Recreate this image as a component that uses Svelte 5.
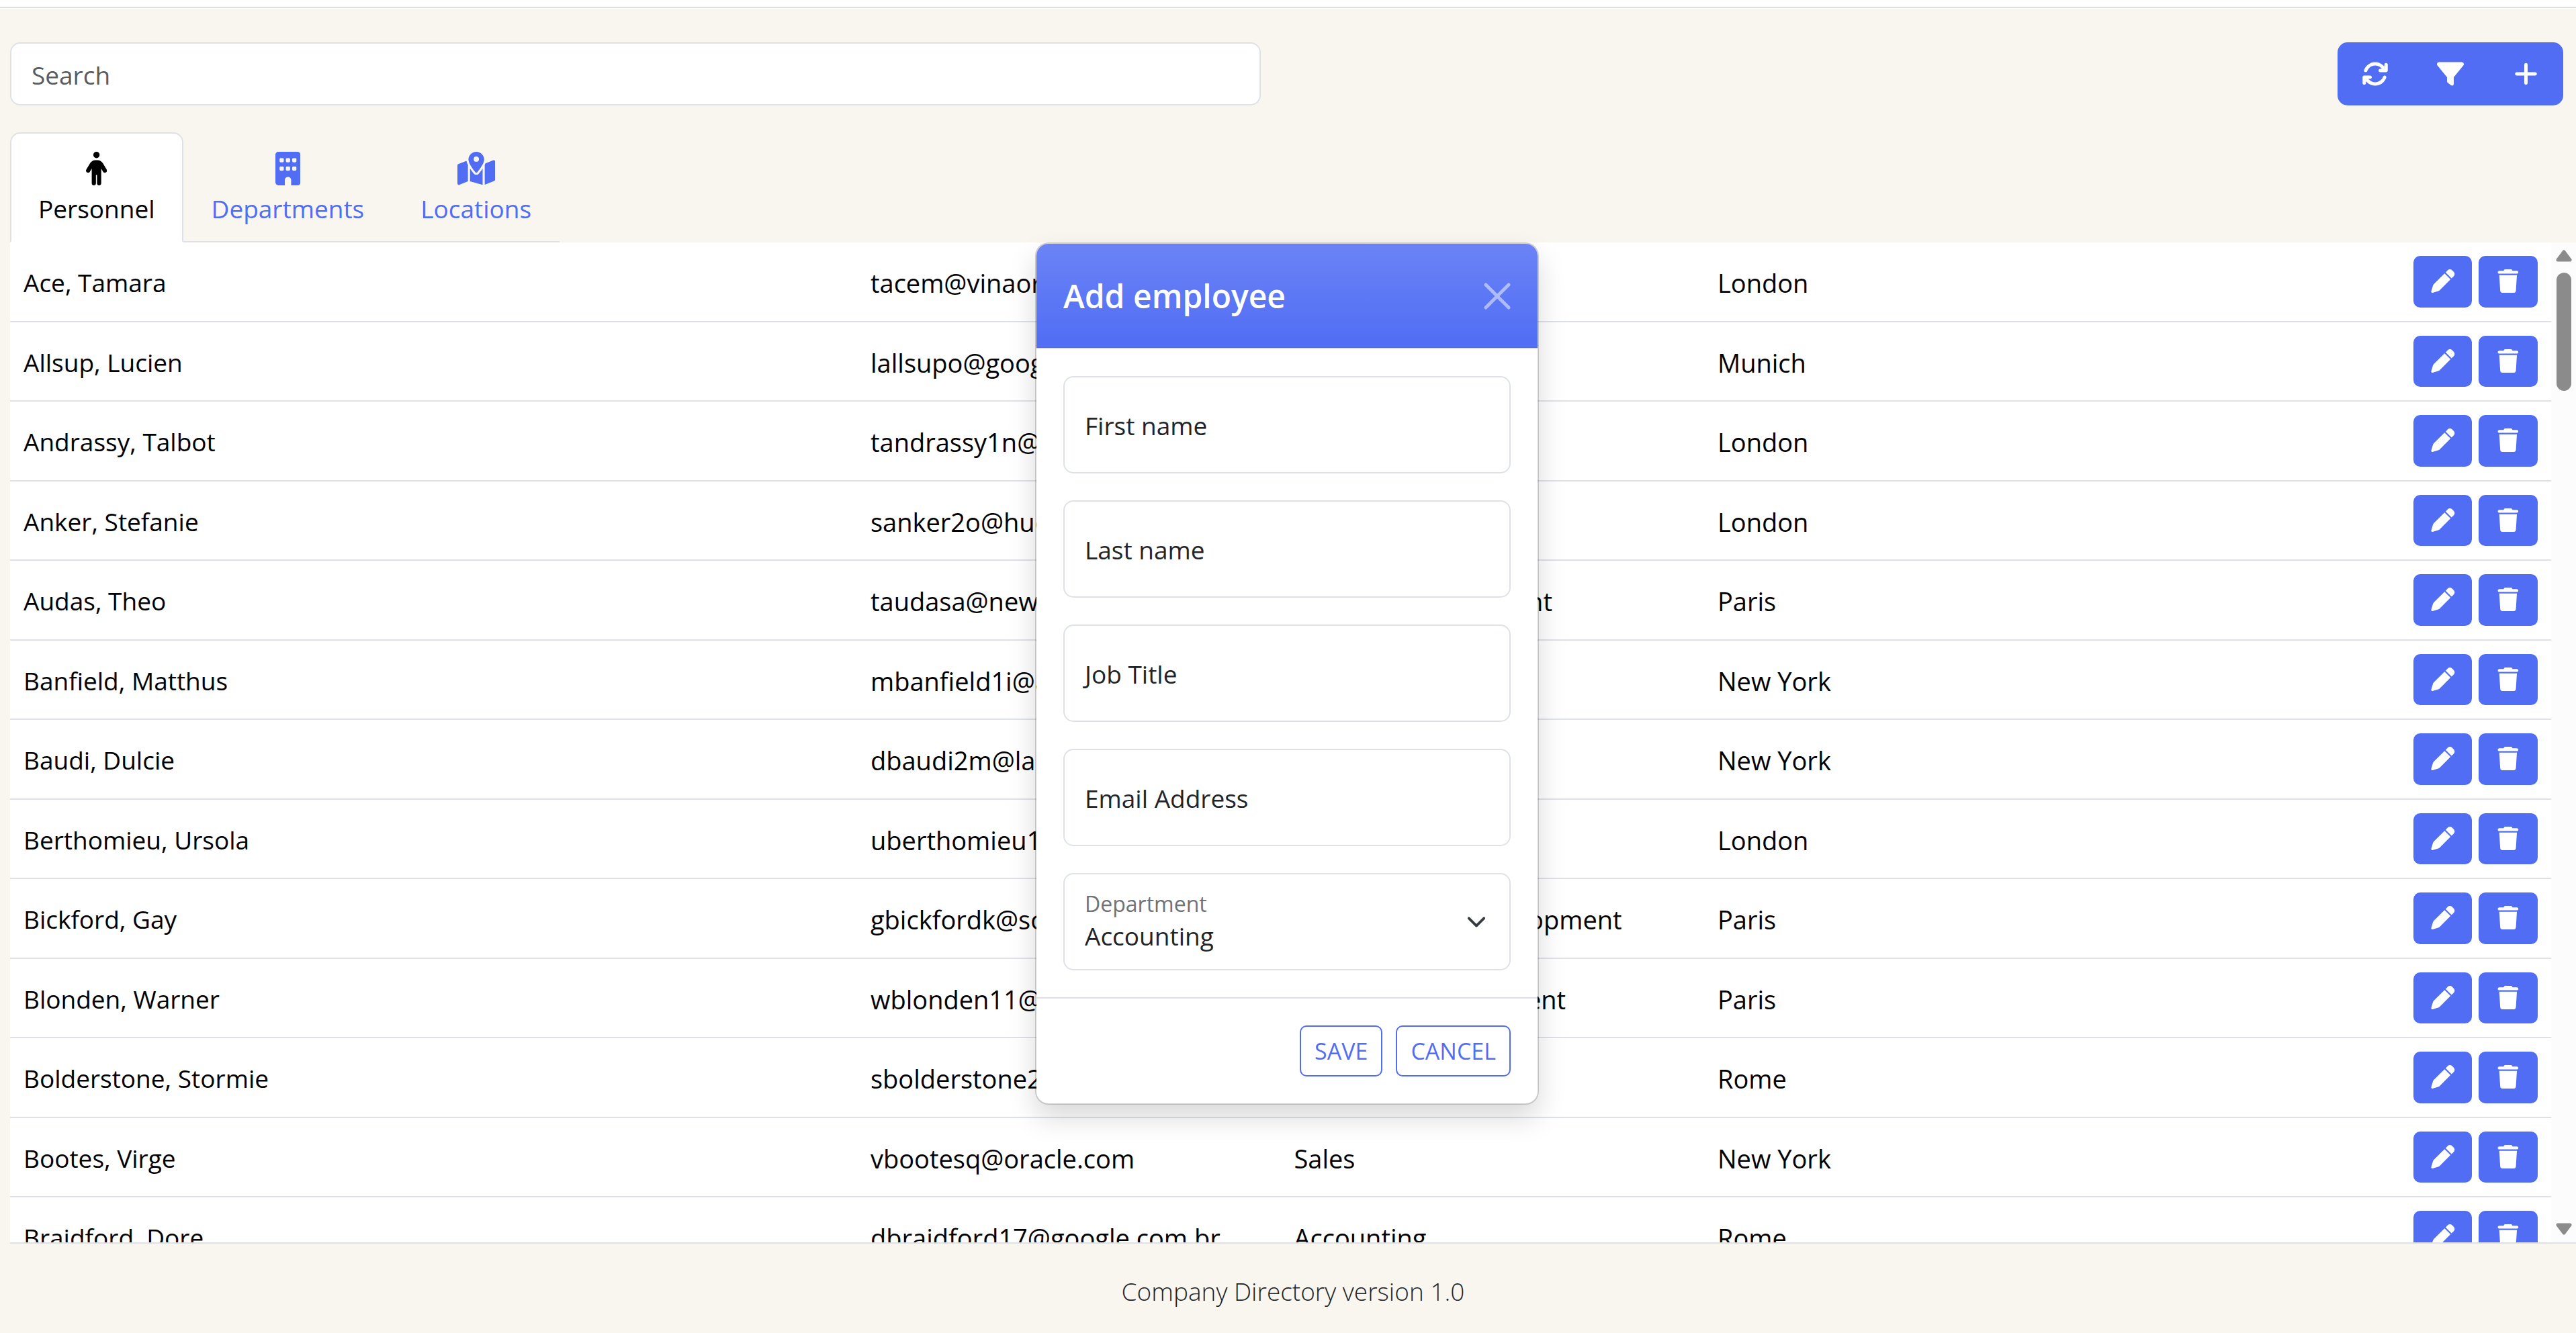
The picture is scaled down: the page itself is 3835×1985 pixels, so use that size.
<script>
	const icons = {
		refresh: {
			w: 512,
			d: 'M105.1 202.6c7.7-21.8 20.2-42.3 37.8-59.8c62.5-62.5 163.8-62.5 226.3 0L386.3 160H352c-17.7 0-32 14.3-32 32s14.3 32 32 32H463.5c0 0 0 0 0 0h.4c17.7 0 32-14.3 32-32V80c0-17.7-14.3-32-32-32s-32 14.3-32 32v35.2L414.4 97.6c-87.5-87.5-229.3-87.5-316.8 0C73.2 122 55.6 150.7 44.8 181.4c-5.9 16.7 2.9 34.9 19.5 40.8s34.9-2.9 40.8-19.5zM39 289.3c-5 1.5-9.8 4.2-13.7 8.2c-4 4-6.7 8.8-8.1 14c-.3 1.2-.6 2.5-.8 3.8c-.3 1.7-.4 3.4-.4 5.1V432c0 17.7 14.3 32 32 32s32-14.3 32-32V396.9l17.6 17.5 0 0c87.5 87.4 229.3 87.4 316.7 0c24.4-24.4 42.1-53.1 52.9-83.7c5.9-16.7-2.9-34.9-19.5-40.8s-34.9 2.9-40.8 19.5c-7.7 21.8-20.2 42.3-37.8 59.8c-62.5 62.5-163.8 62.5-226.3 0l-.1-.1L125.6 352H160c17.7 0 32-14.3 32-32s-14.3-32-32-32H48.4c-1.6 0-3.2 .1-4.8 .3s-3.1 .5-4.6 1z'
		},
		filter: {
			w: 512,
			d: 'M3.9 54.9C10.5 40.9 24.5 32 40 32H472c15.5 0 29.5 8.9 36.1 22.9s4.6 30.5-5.2 42.5L320 320.9V448c0 12.1-6.8 23.2-17.7 28.6s-23.8 4.3-33.5-3l-64-48c-8.1-6-12.8-15.5-12.8-25.6V320.9L9 97.3C-.7 85.4-2.8 68.8 3.9 54.9z'
		},
		plus: {
			w: 448,
			d: 'M256 80c0-17.7-14.3-32-32-32s-32 14.3-32 32V224H48c-17.7 0-32 14.3-32 32s14.3 32 32 32H192V432c0 17.7 14.3 32 32 32s32-14.3 32-32V288H400c17.7 0 32-14.3 32-32s-14.3-32-32-32H256V80z'
		},
		pencil: {
			w: 512,
			d: 'M362.7 19.3L314.3 67.7 444.3 197.7l48.4-48.4c25-25 25-65.5 0-90.5L453.3 19.3c-25-25-65.5-25-90.5 0zm-71 71L58.6 323.5c-10.4 10.4-18 23.3-22.2 37.4L1 481.2C-1.5 489.7 .8 498.8 7 505s15.3 8.5 23.7 6.1l120.3-35.4c14.1-4.2 27-11.8 37.4-22.2L421.7 220.3 291.7 90.3z'
		},
		trash: {
			w: 448,
			d: 'M135.2 17.7L128 32H32C14.3 32 0 46.3 0 64S14.3 96 32 96H416c17.7 0 32-14.3 32-32s-14.3-32-32-32H320l-7.2-14.3C307.4 6.8 296.3 0 284.2 0H163.8c-12.1 0-23.2 6.8-28.6 17.7zM416 128H32L53.2 467c1.6 25.3 22.6 45 47.9 45H346.9c25.3 0 46.3-19.7 47.9-45L416 128z'
		},
		person: {
			w: 320,
			d: 'M112 48a48 48 0 1 1 96 0 48 48 0 1 1 -96 0zm40 304V480c0 17.7-14.3 32-32 32s-32-14.3-32-32V256.9L59.4 304.5c-9.1 15.1-28.8 20-43.9 10.9s-20-28.8-10.9-43.9l58.3-97c17.4-28.9 48.6-46.6 82.3-46.6h29.7c33.7 0 64.9 17.7 82.3 46.6l58.3 97c9.1 15.1 4.2 34.8-10.9 43.9s-34.8 4.2-43.9-10.9L232 256.9V480c0 17.7-14.3 32-32 32s-32-14.3-32-32V352H152z'
		},
		building: {
			w: 384,
			d: 'M48 0C21.5 0 0 21.5 0 48V464c0 26.5 21.5 48 48 48h96V432c0-26.5 21.5-48 48-48s48 21.5 48 48v80h96c26.5 0 48-21.5 48-48V48c0-26.5-21.5-48-48-48H48zM64 240c0-8.8 7.2-16 16-16h32c8.8 0 16 7.2 16 16v32c0 8.8-7.2 16-16 16H80c-8.8 0-16-7.2-16-16V240zm112-16h32c8.8 0 16 7.2 16 16v32c0 8.8-7.2 16-16 16H176c-8.8 0-16-7.2-16-16V240c0-8.8 7.2-16 16-16zm80 16c0-8.8 7.2-16 16-16h32c8.8 0 16 7.2 16 16v32c0 8.8-7.2 16-16 16H272c-8.8 0-16-7.2-16-16V240zM80 96h32c8.8 0 16 7.2 16 16v32c0 8.8-7.2 16-16 16H80c-8.8 0-16-7.2-16-16V112c0-8.8 7.2-16 16-16zm80 16c0-8.8 7.2-16 16-16h32c8.8 0 16 7.2 16 16v32c0 8.8-7.2 16-16 16H176c-8.8 0-16-7.2-16-16V112zM272 96h32c8.8 0 16 7.2 16 16v32c0 8.8-7.2 16-16 16H272c-8.8 0-16-7.2-16-16V112c0-8.8 7.2-16 16-16z'
		},
		map: {
			w: 576,
			d: 'M408 120c0 54.6-73.1 151.9-105.2 192c-7.7 9.6-22 9.6-29.6 0C241.1 271.9 168 174.6 168 120C168 53.7 221.7 0 288 0s120 53.7 120 120zm8 80.4c3.5-6.9 6.7-13.8 9.6-20.6c.5-1.2 1-2.5 1.5-3.7l116-46.4C558.9 123.4 576 135 576 152V422.8c0 9.8-6 18.6-15.1 22.3L416 503V200.4zM137.6 138.3c2.4 14.1 7.2 28.3 12.8 41.5c2.9 6.8 6.1 13.7 9.6 20.6V451.8L32.9 502.7C17.1 509 0 497.4 0 480.4V209.6c0-9.8 6-18.6 15.1-22.3l122.6-49zM327.8 332c13.9-17.4 35.7-45.7 56.2-77V504.3L192 449.4V255c20.5 31.3 42.3 59.6 56.2 77c20.5 25.6 59.1 25.6 79.6 0zM288 152a40 40 0 1 0 0-80 40 40 0 1 0 0 80z'
		}
	};

	const tabs = [
		{ id: 'personnel', label: 'Personnel', icon: 'person' },
		{ id: 'departments', label: 'Departments', icon: 'building' },
		{ id: 'locations', label: 'Locations', icon: 'map' }
	];

	const actions = [
		{ icon: 'refresh', label: 'Refresh' },
		{ icon: 'filter', label: 'Filter' },
		{ icon: 'plus', label: 'Add' }
	];

	const personnel = [
		{ name: 'Ace, Tamara', email: 'tacem@vinaora.com', department: 'Sales', location: 'London' },
		{ name: 'Allsup, Lucien', email: 'lallsupo@google.com', department: 'Services', location: 'Munich' },
		{ name: 'Andrassy, Talbot', email: 'tandrassy1n@bigcartel.com', department: 'Training', location: 'London' },
		{ name: 'Anker, Stefanie', email: 'sanker2o@hud.gov', department: 'Sales', location: 'London' },
		{ name: 'Audas, Theo', email: 'taudasa@newsvine.com', department: 'Product Management', location: 'Paris' },
		{ name: 'Banfield, Matthus', email: 'mbanfield1i@angelfire.com', department: 'Legal', location: 'New York' },
		{ name: 'Baudi, Dulcie', email: 'dbaudi2m@last.fm', department: 'Sales', location: 'New York' },
		{ name: 'Berthomieu, Ursola', email: 'uberthomieu1y@un.org', department: 'Marketing', location: 'London' },
		{ name: 'Bickford, Gay', email: 'gbickfordk@scientific.com', department: 'Research and Development', location: 'Paris' },
		{ name: 'Blonden, Warner', email: 'wblonden11@spiegel.de', department: 'Business Development', location: 'Paris' },
		{ name: 'Bolderstone, Stormie', email: 'sbolderstone2@nba.com', department: 'Support', location: 'Rome' },
		{ name: 'Bootes, Virge', email: 'vbootesq@oracle.com', department: 'Sales', location: 'New York' },
		{ name: 'Braidford, Dore', email: 'dbraidford17@google.com.br', department: 'Accounting', location: 'Rome' }
	];

	const departments = ['Accounting', 'Business Development', 'Legal', 'Marketing', 'Sales', 'Support'];

	let active = $state('personnel');
	let search = $state('');
	let open = $state(true);
	let department = $state('Accounting');
	let form = $state({ firstName: '', lastName: '', jobTitle: '', email: '' });

	const fields = [
		{ key: 'firstName', label: 'First name', type: 'text' },
		{ key: 'lastName', label: 'Last name', type: 'text' },
		{ key: 'jobTitle', label: 'Job Title', type: 'text' },
		{ key: 'email', label: 'Email Address', type: 'email' }
	];

	let rows = $derived(
		personnel.filter((p) => p.name.toLowerCase().includes(search.toLowerCase()))
	);
</script>

{#snippet icon(name)}
	<svg class="icon" viewBox="0 0 {icons[name].w} 512" aria-hidden="true"><path d={icons[name].d} /></svg>
{/snippet}

<div class="page">
	<div class="topline"></div>

	<div class="main">
		<header>
			<div class="toolbar">
				<input class="search" type="text" placeholder="Search" aria-label="Search" bind:value={search} />
				<div class="btn-group">
					{#each actions as a}
						<button aria-label={a.label} onclick={() => (open = open || a.icon === 'plus')}>
							{@render icon(a.icon)}
						</button>
					{/each}
				</div>
			</div>

			<div class="tabs" role="tablist">
				{#each tabs as tab}
					<button
						role="tab"
						class:active={active === tab.id}
						aria-selected={active === tab.id}
						onclick={() => (active = tab.id)}
					>
						<span class="tab-icon">{@render icon(tab.icon)}</span>
						{tab.label}
					</button>
				{/each}
			</div>
		</header>

		<section class="list">
			<div class="rows">
				<table>
					<tbody>
						{#each rows as p}
							<tr>
								<td class="name">{p.name}</td>
								<td>{p.email}</td>
								<td>{p.department}</td>
								<td>{p.location}</td>
								<td class="controls">
									<div class="row-actions">
										<button aria-label="Edit {p.name}">{@render icon('pencil')}</button>
										<button aria-label="Delete {p.name}">{@render icon('trash')}</button>
									</div>
								</td>
							</tr>
						{/each}
					</tbody>
				</table>
			</div>
			<div class="scrollbar" aria-hidden="true">
				<svg class="arrow" viewBox="0 0 24 18"><path d="M12 3L21 15H3z" /></svg>
				<div class="track"><div class="thumb"></div></div>
				<svg class="arrow" viewBox="0 0 24 18"><path d="M12 15L21 3H3z" /></svg>
			</div>
		</section>

		<footer>Company Directory version 1.0</footer>
	</div>
</div>

{#if open}
	<div class="overlay">
		<div class="modal" role="dialog" aria-labelledby="modal-title">
			<div class="modal-header">
				<h5 id="modal-title">Add employee</h5>
				<button class="close" aria-label="Close" onclick={() => (open = false)}>
					<svg viewBox="0 0 40 40"><path d="M3 3L37 37M37 3L3 37" /></svg>
				</button>
			</div>

			<form id="add-form" class="modal-body" onsubmit={(e) => e.preventDefault()}>
				{#each fields as f}
					<div class="field">
						<input id={f.key} type={f.type} placeholder=" " bind:value={form[f.key]} />
						<label for={f.key}>{f.label}</label>
					</div>
				{/each}
				<div class="field">
					<select id="department" bind:value={department}>
						{#each departments as d}
							<option value={d}>{d}</option>
						{/each}
					</select>
					<label for="department" class="raised">Department</label>
					<svg class="chevron" viewBox="0 0 16 16" aria-hidden="true"><path d="m2 5 6 6 6-6" /></svg>
				</div>
			</form>

			<div class="modal-footer">
				<button type="submit" form="add-form">SAVE</button>
				<button type="button" onclick={() => (open = false)}>CANCEL</button>
			</div>
		</div>
	</div>
{/if}

<style>
	:global(body) {
		margin: 0;
		background: #f9f6ef;
	}

	.page,
	.overlay {
		--primary: #506df4;
		--border: #dee2e6;
		font-family: 'Open Sans', 'Noto Sans', sans-serif;
		font-size: 37px;
		line-height: 60px;
		color: #212529;
	}

	.page *,
	.overlay * {
		box-sizing: border-box;
	}

	button,
	input,
	select {
		font: inherit;
		margin: 0;
	}

	button {
		cursor: pointer;
	}

	.icon {
		height: 40px;
		fill: currentColor;
	}

	.page {
		display: flex;
		flex-direction: column;
		height: 100vh;
		overflow: hidden;
	}

	.topline {
		height: 13px;
		border-top: 10px solid #fff;
		border-bottom: 1px solid #fff;
		background: var(--border);
		flex: none;
	}

	.main {
		flex: 1;
		min-height: 0;
		display: flex;
		flex-direction: column;
		padding-left: 15px;
	}

	header {
		padding: 50px 19px 0 0;
	}

	.toolbar {
		display: flex;
		justify-content: space-between;
		margin-bottom: 40px;
	}

	.search {
		width: 49%;
		height: 94px;
		padding: 2px 30px 0;
		border: 2px solid var(--border);
		border-radius: 15px;
		background: #fff;
		color: #212529;
		outline: none;
	}

	.search::placeholder {
		color: #595c5f;
		opacity: 1;
	}

	.btn-group {
		display: flex;
		border-radius: 15px;
		overflow: hidden;
	}

	.btn-group button {
		width: 112px;
		display: flex;
		align-items: center;
		justify-content: center;
		border: 0;
		background: var(--primary);
		color: #fff;
	}

	.tabs {
		display: inline-flex;
		border-bottom: 2px solid var(--border);
		vertical-align: bottom;
	}

	.tabs button {
		display: flex;
		flex-direction: column;
		align-items: center;
		margin-bottom: -2px;
		padding: 22px 40px 18px;
		border: 2px solid transparent;
		border-radius: 15px 15px 0 0;
		background: none;
		color: var(--primary);
	}

	.tabs button.active {
		background: #fff;
		border-color: var(--border) var(--border) #fff;
		color: #000;
	}

	.tab-icon {
		display: flex;
		align-items: center;
		height: 60px;
	}

	.tab-icon .icon {
		height: 50px;
	}

	.list {
		flex: 1;
		min-height: 0;
		display: flex;
		background: #fff;
		overflow: hidden;
	}

	.rows {
		flex: 1;
		overflow: hidden;
	}

	table {
		width: 100%;
		table-layout: fixed;
		border-collapse: separate;
		border-spacing: 0;
		color: #000;
		font-size: 38px;
	}

	td {
		padding: 22px 20px 18px;
		border-bottom: 2px solid var(--border);
		vertical-align: middle;
		white-space: nowrap;
	}

	.name {
		width: 33.333%;
		font-size: 37px;
	}

	.controls {
		padding: 20px;
	}

	.row-actions {
		display: flex;
		justify-content: flex-end;
		gap: 10px;
	}

	.row-actions button {
		padding: 10px 20px;
		border: 2px solid var(--primary);
		border-radius: 10px;
		background: var(--primary);
		color: #fff;
		font-size: 35px;
		line-height: 1.5;
	}

	.row-actions .icon {
		width: 1.25em;
		height: 1em;
		vertical-align: -0.125em;
	}

	.scrollbar {
		width: 37px;
		display: flex;
		flex-direction: column;
		align-items: center;
		gap: 16px;
		padding: 11px 0;
		background: #fcfcfc;
	}

	.arrow {
		width: 24px;
		height: 18px;
		fill: #8b8b8b;
		stroke: #8b8b8b;
		stroke-width: 5;
		stroke-linejoin: round;
	}

	.track {
		flex: 1;
		width: 22px;
	}

	.thumb {
		height: 176px;
		border-radius: 11px;
		background: #8b8b8b;
	}

	footer {
		padding: 41px 0 32px;
		border-top: 2px solid var(--border);
		text-align: center;
		font-weight: 300;
	}

	.overlay {
		position: absolute;
		inset: 0;
		display: flex;
		justify-content: center;
		align-items: flex-start;
		padding: 361px 3px 0 0;
	}

	.modal {
		width: 750px;
		border: 2px solid rgba(0, 0, 0, 0.175);
		border-radius: 20px;
		background: #fff;
		background-clip: padding-box;
		box-shadow: 0 20px 40px rgba(0, 0, 0, 0.15);
	}

	.modal-header {
		display: flex;
		align-items: center;
		justify-content: space-between;
		padding: 40px;
		border-bottom: 2px solid var(--border);
		border-radius: 18px 18px 0 0;
		background: linear-gradient(180deg, #6b83f6, #506df4);
		background-clip: padding-box;
		color: #fff;
	}

	h5 {
		margin: 0;
		font-size: 48px;
		line-height: 75px;
		font-weight: 600;
	}

	.close {
		display: flex;
		padding: 0;
		border: 0;
		background: none;
		opacity: 0.5;
	}

	.close svg {
		width: 40px;
		height: 40px;
		fill: none;
		stroke: #fff;
		stroke-width: 5;
		stroke-linecap: round;
	}

	.modal-body {
		display: flex;
		flex-direction: column;
		gap: 40px;
		padding: 40px;
	}

	.field {
		position: relative;
	}

	.field input,
	.field select {
		display: block;
		width: 100%;
		height: 145px;
		padding: 62px 30px 22px;
		border: 2px solid var(--border);
		border-radius: 15px;
		background: #fff;
		color: #212529;
		appearance: none;
		outline: none;
	}

	.field label {
		position: absolute;
		inset: 0;
		padding: 44px 32px 40px;
		pointer-events: none;
	}

	.field input:focus + label,
	.field input:not(:placeholder-shown) + label,
	.field label.raised {
		padding-top: 16px;
		font-size: 32px;
		color: #707376;
	}

	.chevron {
		position: absolute;
		top: 50%;
		right: 36px;
		width: 30px;
		height: 30px;
		margin-top: -15px;
		pointer-events: none;
		fill: none;
		stroke: #343a40;
		stroke-width: 2;
		stroke-linecap: round;
		stroke-linejoin: round;
	}

	.modal-footer {
		display: flex;
		justify-content: flex-end;
		gap: 20px;
		padding: 40px;
		border-top: 2px solid var(--border);
	}

	.modal-footer button {
		height: 76px;
		padding: 0 20px;
		border: 2px solid var(--primary);
		border-radius: 10px;
		background: #fff;
		color: var(--primary);
		font-size: 34px;
	}
</style>
